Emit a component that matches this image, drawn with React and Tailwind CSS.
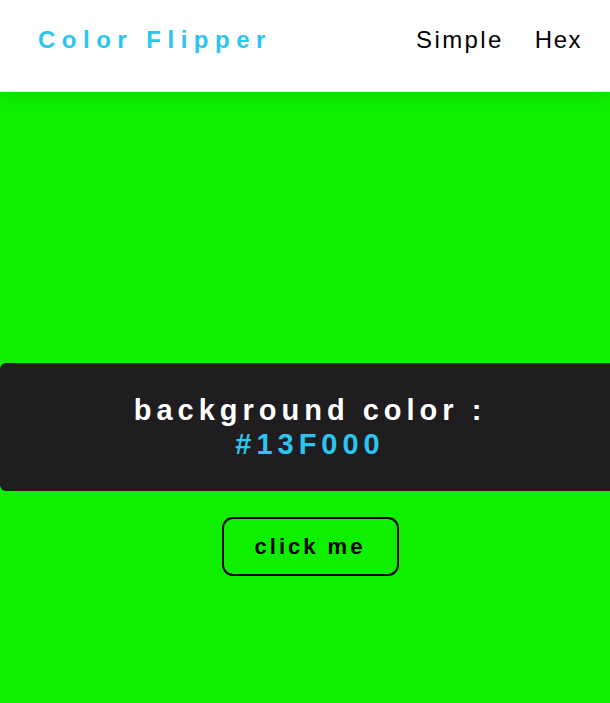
import React from 'react';

const font = { fontFamily: '"Liberation Sans", Arial, sans-serif' };

const Navbar = () => (
    <nav className="relative z-10 h-[92px] bg-white shadow-[0_5px_15px_rgba(0,0,0,0.1)]">
        <div className="flex items-start justify-between pt-[26px] pl-[38px] pr-[28px]">
            <h4 className="text-[24px] leading-[28px] font-bold tracking-[6.5px] text-[#2bc5ef]">
                Color Flipper
            </h4>
            <ul className="flex gap-[31px] text-[24px] leading-[28px] text-black">
                <li className="tracking-[2.4px]">Simple</li>
                <li className="tracking-[1.5px]">Hex</li>
            </ul>
        </div>
    </nav>
);

const App = () => {
    const color = '#13F000';

    return (
        <div className="min-h-screen overflow-hidden bg-[#0ff000]" style={font}>
            <Navbar />
            <main className="w-[620px] pt-[271px] flex flex-col items-center">
                <div className="w-full rounded-l-[6px] bg-[#1f1d1f] py-[30px] text-center text-[29px] leading-[34px] font-bold tracking-[5px]">
                    <h2 className="text-white">background color :</h2>
                    <span className="block text-[#2bc5ef]">{color}</span>
                </div>
                <button
                    type="button"
                    className="mt-[26px] w-[177px] h-[59px] border-2 border-black rounded-[11px] text-[22px] font-bold tracking-[3px] text-black"
                >
                    click me
                </button>
            </main>
        </div>
    );
};

export default App;
